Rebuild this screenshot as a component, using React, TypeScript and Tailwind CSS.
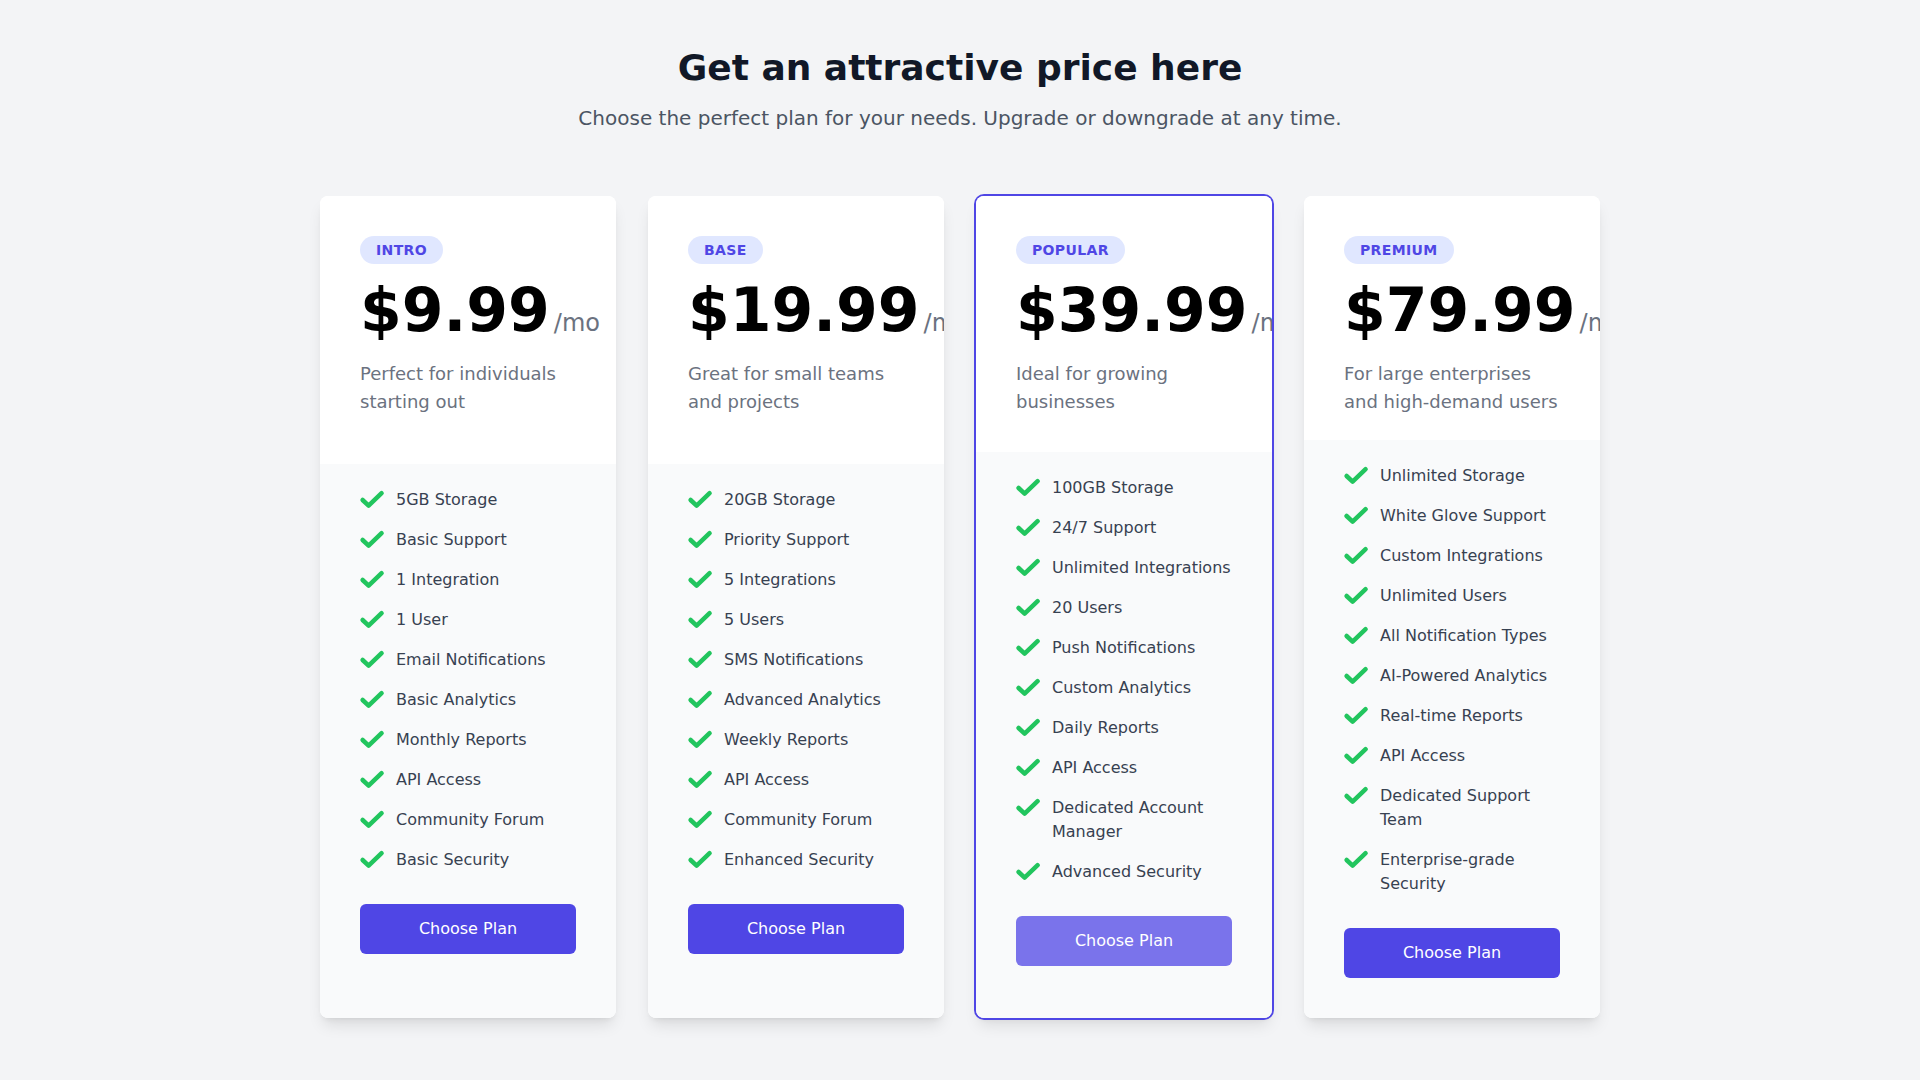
import React from "react";

type Plan = {
  name: string;
  price: string;
  desc: string;
  features: string[];
  popular?: boolean;
};

const plans: Plan[] = [
  {
    name: "Intro",
    price: "$9.99",
    desc: "Perfect for individuals starting out",
    features: [
      "5GB Storage",
      "Basic Support",
      "1 Integration",
      "1 User",
      "Email Notifications",
      "Basic Analytics",
      "Monthly Reports",
      "API Access",
      "Community Forum",
      "Basic Security",
    ],
  },
  {
    name: "Base",
    price: "$19.99",
    desc: "Great for small teams and projects",
    features: [
      "20GB Storage",
      "Priority Support",
      "5 Integrations",
      "5 Users",
      "SMS Notifications",
      "Advanced Analytics",
      "Weekly Reports",
      "API Access",
      "Community Forum",
      "Enhanced Security",
    ],
  },
  {
    name: "Popular",
    price: "$39.99",
    desc: "Ideal for growing businesses",
    popular: true,
    features: [
      "100GB Storage",
      "24/7 Support",
      "Unlimited Integrations",
      "20 Users",
      "Push Notifications",
      "Custom Analytics",
      "Daily Reports",
      "API Access",
      "Dedicated Account Manager",
      "Advanced Security",
    ],
  },
  {
    name: "Premium",
    price: "$79.99",
    desc: "For large enterprises and high-demand users",
    features: [
      "Unlimited Storage",
      "White Glove Support",
      "Custom Integrations",
      "Unlimited Users",
      "All Notification Types",
      "AI-Powered Analytics",
      "Real-time Reports",
      "API Access",
      "Dedicated Support Team",
      "Enterprise-grade Security",
    ],
  },
];

function CheckIcon() {
  return (
    <svg
      className="h-6 w-6 shrink-0 text-[#22c55e]"
      viewBox="0 0 24 24"
      fill="none"
      stroke="currentColor"
      strokeWidth={4.5}
      strokeLinecap="round"
      strokeLinejoin="round"
      overflow="visible"
    >
      <polyline points="2.6,12 8.6,17.6 21.6,5.2" />
    </svg>
  );
}

function Card({ plan }: { plan: Plan }) {
  return (
    <div
      className={
        plan.popular
          ? "flex flex-col overflow-hidden rounded-lg bg-white shadow-lg ring-2 ring-[#4f46e5]"
          : "flex flex-col overflow-hidden rounded-lg bg-white shadow-lg"
      }
    >
      <div className="grow bg-white px-10 pt-10 pb-6">
        <div>
          <span className="inline-flex rounded-full bg-[#e0e7ff] px-4 py-1 text-sm font-semibold uppercase tracking-wide text-[#4f46e5]">
            {plan.name}
          </span>
        </div>
        <div className="mt-4 flex items-baseline whitespace-nowrap text-6xl font-extrabold text-black">
          {plan.price}
          <span className="ml-1 text-2xl font-medium text-[#6b7280]">/mo</span>
        </div>
        <p className="mt-5 text-lg text-[#6b7280]">{plan.desc}</p>
      </div>
      <div className="grow bg-[#f9fafb] px-10 pt-6 pb-10">
        <ul className="space-y-4">
          {plan.features.map((f) => (
            <li key={f} className="flex items-start">
              <CheckIcon />
              <p className="ml-3 text-base text-[#374151]">{f}</p>
            </li>
          ))}
        </ul>
        <div className="mt-8">
          <a
            href="#"
            className={
              plan.popular
                ? "block w-full rounded-md border border-transparent bg-[#4f46e5]/75 px-5 py-3 text-center text-base font-medium text-white"
                : "block w-full rounded-md border border-transparent bg-[#4f46e5] px-5 py-3 text-center text-base font-medium text-white"
            }
          >
            Choose Plan
          </a>
        </div>
      </div>
    </div>
  );
}

export default function App() {
  return (
    <div className="min-h-screen bg-[#f3f4f6] font-['DejaVu_Sans',sans-serif] pt-12 pb-16">
      <div className="text-center">
        <h2 className="text-4xl font-extrabold text-[#111827]">Get an attractive price here</h2>
        <p className="mt-4 text-xl text-[#4b5563]">
          Choose the perfect plan for your needs. Upgrade or downgrade at any time.
        </p>
      </div>
      <div className="mx-auto mt-16 grid max-w-7xl grid-cols-4 gap-8">
        {plans.map((p) => (
          <Card key={p.name} plan={p} />
        ))}
      </div>
    </div>
  );
}
